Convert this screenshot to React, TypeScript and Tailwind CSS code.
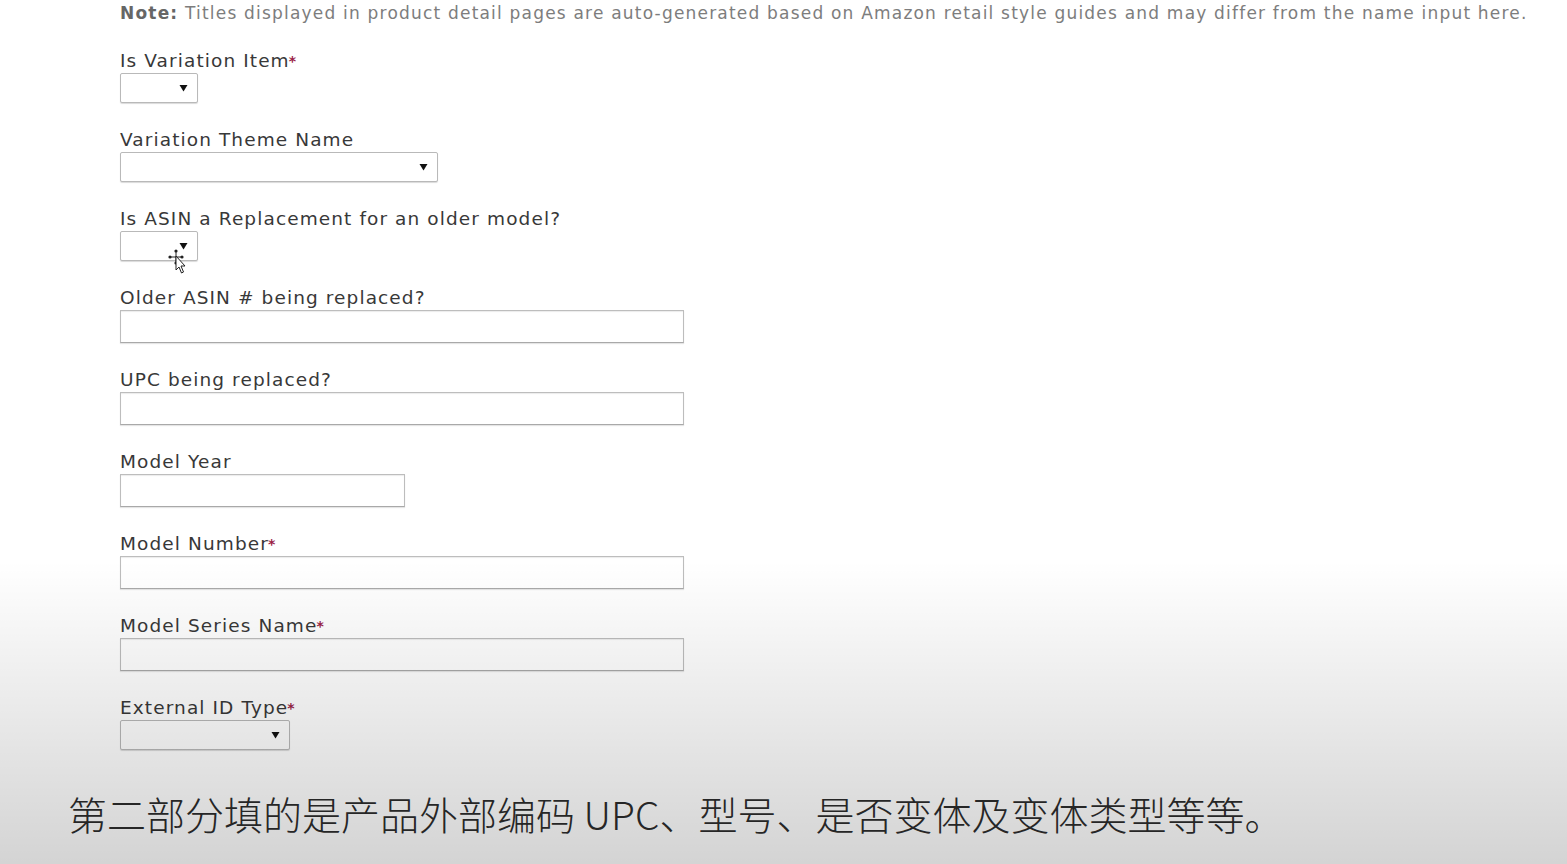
import React from "react";

type Field = {
  label: string;
  required?: boolean;
  kind: "select" | "input";
  width: string;
};

const fields: Field[] = [
  { label: "Is Variation Item", required: true, kind: "select", width: "w-[78px]" },
  { label: "Variation Theme Name", kind: "select", width: "w-[318px]" },
  { label: "Is ASIN a Replacement for an older model?", kind: "select", width: "w-[78px]" },
  { label: "Older ASIN # being replaced?", kind: "input", width: "w-[564px]" },
  { label: "UPC being replaced?", kind: "input", width: "w-[564px]" },
  { label: "Model Year", kind: "input", width: "w-[285px]" },
  { label: "Model Number", required: true, kind: "input", width: "w-[564px]" },
  { label: "Model Series Name", required: true, kind: "input", width: "w-[564px]" },
  { label: "External ID Type", required: true, kind: "select", width: "w-[170px]" },
];

function Arrow() {
  return (
    <svg width="9" height="8" viewBox="0 0 9 8" className="shrink-0">
      <polygon points="0.5,1 8.5,1 4.5,7.5" fill="#111" />
    </svg>
  );
}

function MoveCursor() {
  return (
    <svg width="26" height="30" viewBox="0 0 26 30" className="absolute left-[165px] top-[245px] pointer-events-none">
      <circle cx="11" cy="6" r="1.6" fill="#222" />
      <circle cx="11" cy="18" r="1.6" fill="#222" />
      <circle cx="5" cy="12" r="1.6" fill="#222" />
      <circle cx="17" cy="12" r="1.6" fill="#222" />
      <path d="M11 6 V18 M5 12 H17" stroke="#222" strokeWidth="1" />
      <path d="M11 11 L11 25 L14 22 L16.5 28 L18.5 27 L16 21 L20 21 Z" fill="#fff" stroke="#222" strokeWidth="1" />
    </svg>
  );
}

export default function App() {
  return (
    <div className="relative w-[1567px] h-[864px] overflow-hidden bg-white font-['DejaVu_Sans',Verdana,sans-serif]">
      <div className="flex flex-col gap-[27px] pl-[120px] pt-[5px]">
        <p className="text-[17px] leading-[20px] tracking-[1.2px] text-[#7d7d7d] whitespace-nowrap -mt-[2px] mb-[1px]">
          <span className="font-bold text-[#666]">Note:</span> Titles displayed in product detail pages are auto-generated based on Amazon retail style guides and may differ from the name input here.
        </p>

        {fields.map((f, i) => (
          <div key={i} className="flex flex-col gap-[2px]">
            <label className="text-[18.5px] leading-[20px] tracking-[1.1px] text-[#383838] whitespace-nowrap">
              {f.label}
              {f.required && <span className="text-[#9b2246] text-[14px] font-bold align-top -ml-[1px]">*</span>}
            </label>
            {f.kind === "select" ? (
              <div className={`${f.width} h-[30px] flex items-center justify-end pr-[9px] border border-[#b9b9b9] rounded-[2px] bg-white shadow-[0_1px_1px_rgba(0,0,0,0.15)]`}>
                <Arrow />
              </div>
            ) : (
              <div className={`${f.width} h-[33px] border border-[#bdbdbd] border-b-[#a9a9a9] bg-white shadow-[inset_0_1px_1px_rgba(0,0,0,0.08),0_1px_1px_rgba(0,0,0,0.1)]`} />
            )}
          </div>
        ))}
      </div>

      <MoveCursor />

      {/* caption shade */}
      <div className="absolute left-0 right-0 top-[560px] bottom-0 pointer-events-none bg-gradient-to-b from-transparent to-black/[0.17]" />

      <div className="absolute left-[68px] top-[787px] text-[39px] leading-[52px] text-[#262626] font-light whitespace-nowrap font-['Noto_Sans_CJK_SC','Liberation_Sans',sans-serif]">
        第二部分填的是产品外部编码 UPC、型号、是否变体及变体类型等等。
      </div>
    </div>
  );
}
